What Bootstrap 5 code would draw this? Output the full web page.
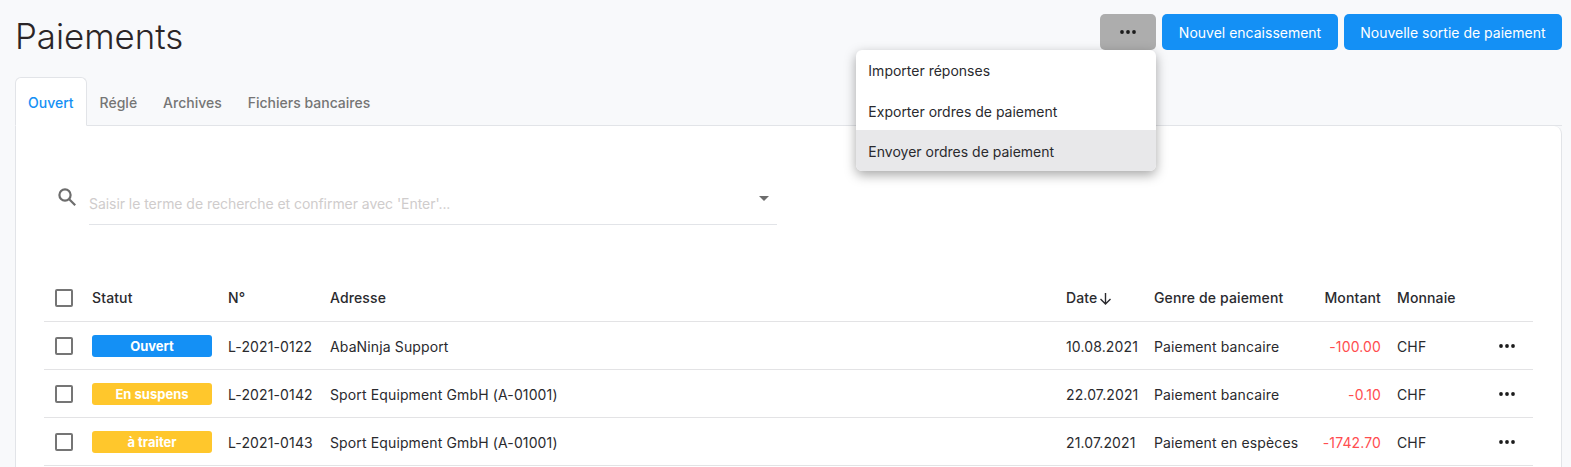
<!DOCTYPE html>
<html lang="fr">
<head>
<meta charset="utf-8">
<title>Paiements</title>
<link href="https://cdn.jsdelivr.net/npm/bootstrap@5.3.0/dist/css/bootstrap.min.css" rel="stylesheet">
<style>
html,body{height:467px;overflow:hidden}
body{background:#f8f9fb;font-family:Inter,"Liberation Sans",sans-serif;font-size:14px;color:#2a2a2e}
.pg-wrap{padding:14px 9px 0 15px}
.pg-title{font-size:34.8px;font-weight:300;line-height:44px;margin:0;color:#2b2527}
.pg-head{height:63px}
.act-btn{height:36px;border:0;border-radius:5px;background:#1490f5;color:#fff;font-size:14px;padding:0 16.5px;font-weight:400}
.more-btn{width:56px;height:36px;border:0;border-radius:5px;background:#adadad;display:flex;align-items:center;justify-content:center;padding:0}
.act-group{gap:6px}
.menu-host{position:relative}
.pop-menu{display:block;position:absolute;top:36px;left:-244px;width:300px;padding:0;border:0;border-radius:6px;background:#fff;box-shadow:0 4px 12px rgba(0,0,0,.35);z-index:5;overflow:hidden;--bs-dropdown-min-width:0}
.pop-menu .dropdown-item{height:40px;line-height:42px;padding:0 12px;font-size:14px;color:#2a2a2e}
.pop-menu li+li .dropdown-item{line-height:44px}
.pop-menu .dropdown-item.is-hot{background:#e8e8ea;height:41px}
.tabs-row{--bs-nav-tabs-border-color:#e2e4e8;--bs-nav-tabs-border-radius:6px;border-bottom:1px solid #e2e4e8}
.tabs-row .nav-link{height:49px;line-height:49px;padding:0 12px;font-size:14px;font-weight:500;color:#757575;border:1px solid transparent}
.tabs-row .nav-link.active{color:#1490f5;background:#fff;border-color:#e2e4e8 #e2e4e8 #fff}
.pay-panel{background:#fff;border:1px solid #e2e4e8;border-top:0;border-radius:0 8px 8px 8px;height:400px;padding:0 28px}
.search-row{padding-top:60px;height:148px;align-items:flex-start}
.search-ico{margin:1px 11px 0 12px;flex:none}
.search-box{width:688px;height:39px;border-bottom:1px solid #e2e4e8;display:flex;align-items:center;justify-content:space-between;padding:0 8px 4px 0;color:#cfcccc;font-size:14px;letter-spacing:-.05px}
.caret-tri{width:0;height:0;border-left:5.5px solid transparent;border-right:5.5px solid transparent;border-top:5.5px solid #6d6d6d;margin-top:-10px}
.pay-table{margin:0;--bs-table-border-color:#e3e3e5;table-layout:fixed;width:1489px;font-size:14px;letter-spacing:.13px;color:#2a2a2e}
.pay-table th,.pay-table td{padding:0;height:48px;vertical-align:middle;border-bottom:1px solid #e3e3e5;white-space:nowrap;color:#2a2a2e}
.pay-table tbody td{padding-top:2px}
.pay-table th{font-weight:500}
.pay-table thead th{height:47px}
.pay-table thead .chk{margin-top:2px}
.chk{width:18px;height:18px;border:2px solid #757575;border-radius:2px;background:#fff;display:block;margin-left:11px}
.st-pill{display:block;width:120px;height:22px;line-height:22px;border-radius:3px;color:#fff;font-size:13px;font-weight:700;text-align:center;letter-spacing:0}
.st-blue{background:#1490f5}
.st-amber{background:#ffc72c}
.pay-table td.amt{text-align:right;color:#ff4d4f}
.amt-h{text-align:right}
.dots{display:block;margin-left:22px}
.sort-arrow{margin-left:2px;vertical-align:-2px}
</style>
</head>
<body>
<div class="pg-wrap">
  <div class="d-flex justify-content-between align-items-start pg-head">
    <h1 class="pg-title">Paiements</h1>
    <div class="d-flex act-group">
      <div class="menu-host">
        <button class="more-btn" type="button" aria-label="Plus">
          <svg width="16" height="4" viewBox="0 0 16 4"><circle cx="2" cy="2" r="1.9" fill="#1c1c1c"/><circle cx="8" cy="2" r="1.9" fill="#1c1c1c"/><circle cx="14" cy="2" r="1.9" fill="#1c1c1c"/></svg>
        </button>
        <ul class="dropdown-menu pop-menu">
          <li><a class="dropdown-item" href="#">Importer réponses</a></li>
          <li><a class="dropdown-item" href="#">Exporter ordres de paiement</a></li>
          <li><a class="dropdown-item is-hot" href="#">Envoyer ordres de paiement</a></li>
        </ul>
      </div>
      <button class="act-btn" type="button">Nouvel encaissement</button>
      <button class="act-btn" type="button">Nouvelle sortie de paiement</button>
    </div>
  </div>
  <ul class="nav nav-tabs tabs-row">
    <li class="nav-item"><a class="nav-link active" href="#">Ouvert</a></li>
    <li class="nav-item"><a class="nav-link" href="#">Réglé</a></li>
    <li class="nav-item"><a class="nav-link" href="#">Archives</a></li>
    <li class="nav-item"><a class="nav-link" href="#">Fichiers bancaires</a></li>
  </ul>
  <div class="pay-panel">
    <div class="d-flex search-row">
      <svg class="search-ico" width="22" height="22" viewBox="0 0 22 22" fill="none" stroke="#6d6d6d" stroke-width="2.2"><circle cx="9" cy="8" r="5.6"/><path d="M13 12l6.2 6.2"/></svg>
      <div class="search-box"><span>Saisir le terme de recherche et confirmer avec 'Enter'...</span><span class="caret-tri"></span></div>
    </div>
    <table class="table pay-table">
      <colgroup><col style="width:48px"><col style="width:136px"><col style="width:102px"><col style="width:736px"><col style="width:88px"><col style="width:151px"><col style="width:76px"><col style="width:16px"><col style="width:80px"><col style="width:56px"></colgroup>
      <thead>
        <tr><th><span class="chk"></span></th><th>Statut</th><th>N°</th><th>Adresse</th><th>Date<svg class="sort-arrow" width="13" height="13" viewBox="0 0 13 13" fill="none" stroke="#2a2a2e" stroke-width="1.4"><path d="M6.5 1v11M1.5 7l5 5 5-5"/></svg></th><th>Genre de paiement</th><th class="amt-h">Montant</th><th></th><th>Monnaie</th><th></th></tr>
      </thead>
      <tbody>
        <tr><td><span class="chk"></span></td><td><span class="st-pill st-blue">Ouvert</span></td><td>L-2021-0122</td><td>AbaNinja Support</td><td>10.08.2021</td><td>Paiement bancaire</td><td class="amt">-100.00</td><td></td><td>CHF</td><td><svg class="dots" width="16" height="4" viewBox="0 0 16 4"><circle cx="2" cy="2" r="1.9" fill="#1c1c1c"/><circle cx="8" cy="2" r="1.9" fill="#1c1c1c"/><circle cx="14" cy="2" r="1.9" fill="#1c1c1c"/></svg></td></tr>
        <tr><td><span class="chk"></span></td><td><span class="st-pill st-amber">En suspens</span></td><td>L-2021-0142</td><td>Sport Equipment GmbH (A-01001)</td><td>22.07.2021</td><td>Paiement bancaire</td><td class="amt">-0.10</td><td></td><td>CHF</td><td><svg class="dots" width="16" height="4" viewBox="0 0 16 4"><circle cx="2" cy="2" r="1.9" fill="#1c1c1c"/><circle cx="8" cy="2" r="1.9" fill="#1c1c1c"/><circle cx="14" cy="2" r="1.9" fill="#1c1c1c"/></svg></td></tr>
        <tr><td><span class="chk"></span></td><td><span class="st-pill st-amber">à traiter</span></td><td>L-2021-0143</td><td>Sport Equipment GmbH (A-01001)</td><td>21.07.2021</td><td>Paiement en espèces</td><td class="amt">-1742.70</td><td></td><td>CHF</td><td><svg class="dots" width="16" height="4" viewBox="0 0 16 4"><circle cx="2" cy="2" r="1.9" fill="#1c1c1c"/><circle cx="8" cy="2" r="1.9" fill="#1c1c1c"/><circle cx="14" cy="2" r="1.9" fill="#1c1c1c"/></svg></td></tr>
      </tbody>
    </table>
  </div>
</div>
<script src="https://cdn.jsdelivr.net/npm/bootstrap@5.3.0/dist/js/bootstrap.bundle.min.js"></script>
</body>
</html>
